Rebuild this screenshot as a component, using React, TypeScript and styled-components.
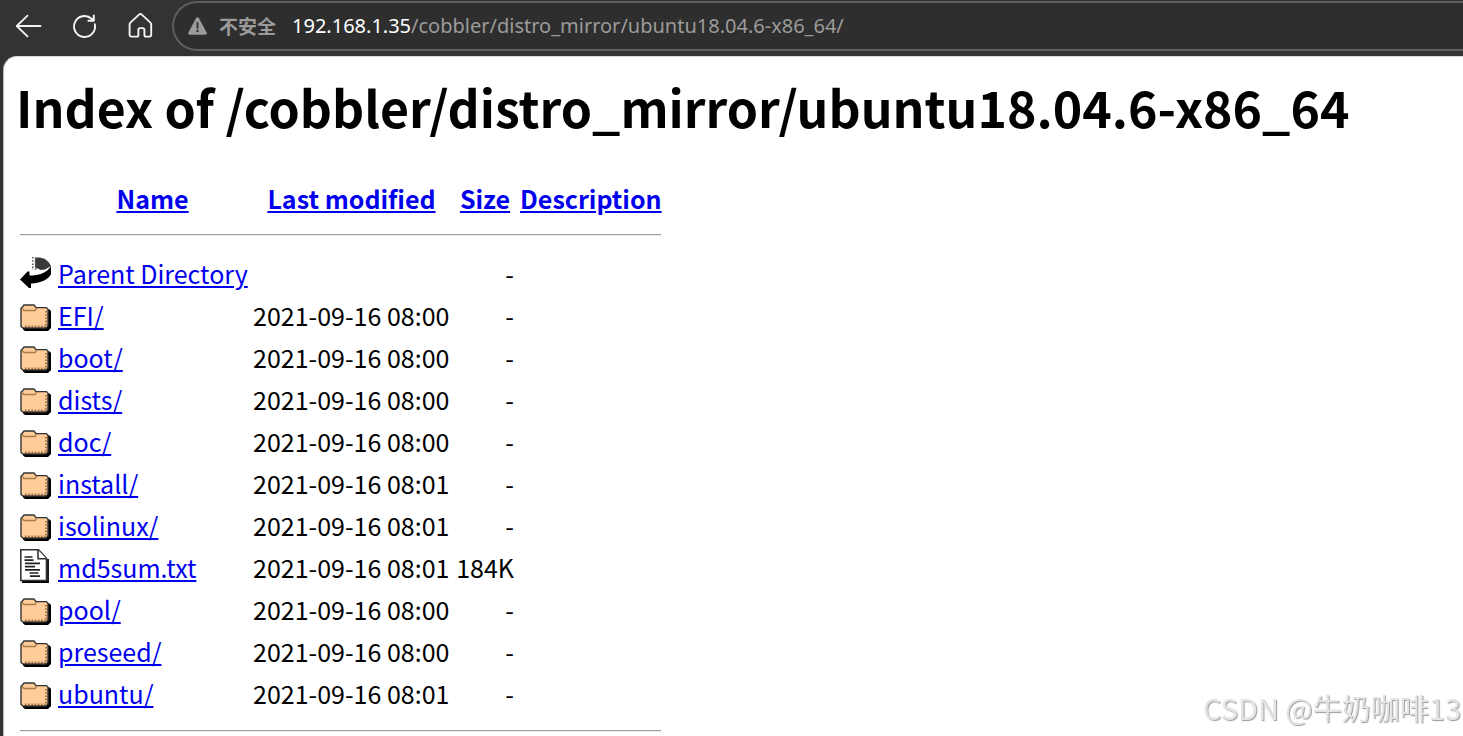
import styled, { createGlobalStyle } from 'styled-components';

const GlobalStyle = createGlobalStyle`
  *, *::before, *::after { box-sizing: border-box; }
  html { overflow: hidden; }
  body {
    margin: 0;
    background: #333333;
    color: #000000;
    font-family: 'Noto Sans CJK SC', 'Noto Sans', sans-serif;
    font-size: 25px;
  }
`;

const Browser = styled.div`
  display: flex;
  flex-direction: column;
  height: 100vh;
  overflow: hidden;
`;

const Toolbar = styled.header`
  display: flex;
  flex: none;
  align-items: center;
  padding: 1px 0 5px 12px;
  background: #333333;
`;

const ToolButton = styled.button`
  display: flex;
  align-items: center;
  justify-content: center;
  width: 32px;
  height: 32px;
  margin-right: 24px;
  padding: 0;
  border: 0;
  background: none;
  color: #f4f4f4;
`;

const AddressBar = styled.div`
  display: flex;
  flex: 1;
  align-items: center;
  min-width: 0;
  height: 50px;
  margin-left: -8px;
  padding-left: 14px;
  border: 2px solid #5e5e5e;
  border-right: 0;
  border-radius: 25px 0 0 25px;
  background: #2e2e2e;
`;

const SecurityButton = styled.button`
  display: flex;
  align-items: center;
  gap: 12px;
  margin-right: 16px;
  padding: 0;
  border: 0;
  background: none;
  color: #9b9b9b;
  font-family: 'Noto Sans CJK SC', sans-serif;
  font-size: 19px;
  font-weight: 700;
  line-height: 28px;
  white-space: nowrap;
`;

const Address = styled.div`
  flex: 1;
  overflow: hidden;
  color: #9b9b9b;
  font-family: 'Noto Sans', sans-serif;
  font-size: 20px;
  line-height: 32px;
  white-space: nowrap;
  outline: none;
`;

const Host = styled.span`
  color: #ffffff;
`;

const Page = styled.main`
  flex: 1;
  min-height: 0;
  margin-left: 3px;
  padding: 12px 12px 0;
  overflow: hidden;
  border-top: 1px solid #d8d8d8;
  border-left: 1px solid #b8b8b8;
  border-radius: 14px 0 0 0;
  background: #ffffff;
`;

const Title = styled.h1`
  margin: 0 0 36px;
  font-size: 50px;
  font-weight: 700;
  line-height: 74px;
  white-space: nowrap;
`;

const Listing = styled.table`
  width: 641px;
  margin-left: 4px;
  table-layout: fixed;
  border-collapse: collapse;
`;

const Col = styled.col<{ $width: number }>`
  width: ${({ $width }) => $width}px;
`;

const HeadCell = styled.th`
  padding: 0 6px 0 0;
  font-weight: 700;
  line-height: 38px;
  text-align: center;
  white-space: nowrap;
  &:last-child { padding-right: 0; }
`;

const Cell = styled.td<{ $align?: 'left' | 'right' }>`
  height: 42px;
  padding: 0 6px 0 0;
  line-height: 40px;
  text-align: ${({ $align = 'left' }) => $align};
  vertical-align: bottom;
  white-space: nowrap;
`;

const IconCell = styled(Cell)`
  padding: 0 0 4px;
`;

const RuleCell = styled.td`
  padding: 0;
`;

const Rule = styled.hr`
  margin: 17px 0 15px;
  border-width: 1px 0;
  border-style: solid;
  border-color: #9a9a9a transparent #eeeeee;
`;

const Link = styled.a`
  color: #0000ee;
  text-decoration: underline;
`;

const FileIcon = styled.svg`
  display: block;
  width: 32px;
  height: 35px;
`;

const Watermark = styled.div`
  position: fixed;
  right: 2px;
  bottom: 7px;
  color: #e4e4e4;
  font-size: 29px;
  font-weight: 400;
  line-height: 44px;
  text-shadow: 1px 1px 1px #9c9c9c;
  white-space: nowrap;
  pointer-events: none;
`;

function BackIcon() {
  return (
    <svg width="28" height="28" viewBox="0 0 28 28" fill="none" stroke="currentColor" strokeWidth="1.8" strokeLinecap="round" strokeLinejoin="round" aria-hidden="true">
      <path d="M26.5 14H2.7M13.5 3.6L2.7 14l10.8 10.4" />
    </svg>
  );
}

function ReloadIcon() {
  return (
    <svg width="28" height="28" viewBox="0 0 28 28" fill="none" stroke="currentColor" strokeWidth="1.9" strokeLinecap="round" strokeLinejoin="round" aria-hidden="true">
      <path d="M24.8 12.2A10.5 10.5 0 1 1 21.600 6.700L23.600 8.600M23.800 3.400V8.800H18.400" />
    </svg>
  );
}

function HomeIcon() {
  return (
    <svg width="28" height="28" viewBox="0 0 28 28" fill="none" stroke="currentColor" strokeWidth="1.9" strokeLinejoin="round" aria-hidden="true">
      <path d="M13 2.600a2 2 0 0 1 2.800 0l8.600 8c.5.5.8 1.100.8 1.800v10.400c0 1.100-.7 1.800-1.800 1.800h-3.400c-1 0-1.600-.6-1.600-1.600v-5.200c0-1-.7-1.700-1.700-1.700h-2.600c-1 0-1.700.7-1.700 1.700v5.200c0 1-.6 1.600-1.600 1.600H5.400c-1.100 0-1.800-.7-1.800-1.800V12.400c0-.7.3-1.300.8-1.800z" />
    </svg>
  );
}

function WarningIcon() {
  return (
    <svg width="19" height="18" viewBox="0 0 19 18" aria-hidden="true">
      <path d="M8 1.2a1.7 1.7 0 0 1 3 0l7.6 14.200c.6 1.100-.1 2.300-1.300 2.300H1.700c-1.200 0-1.900-1.200-1.300-2.300z" fill="#9b9b9b" />
      <path d="M9.500 6v5" stroke="#2e2e2e" strokeWidth="1.800" strokeLinecap="round" />
      <circle cx="9.500" cy="14" r="1.200" fill="#2e2e2e" />
    </svg>
  );
}

function FolderIcon() {
  return (
    <FileIcon viewBox="0 0 32 35" role="img" aria-label="[DIR]">
      <path d="M3 32v1.500L5 35h23l3-3V15l-2-2z" fill="#000000" />
      <path d="M1 30.500V12l1.500-1 1.500-2h10l2 2.600h10.500l1.500 1.800V30l-2 2H3z" fill="#ffcc99" stroke="#333333" strokeWidth="1.400" />
      <path d="M2 12.500l2 2h11l1.500-2" fill="none" stroke="#a87848" strokeWidth="1.300" />
      <path d="M5 30.300H25.500" fill="none" stroke="#a06a3a" strokeWidth="1.700" strokeDasharray="1.600 1.600" />
      <path d="M26 15V29.500" fill="none" stroke="#a06a3a" strokeWidth="1.700" strokeDasharray="1.600 1.600" />
    </FileIcon>
  );
}

function TextIcon() {
  return (
    <FileIcon viewBox="0 0 32 35" role="img" aria-label="[TXT]">
      <path d="M2 34H28V11" fill="none" stroke="#000000" strokeWidth="1.800" />
      <path d="M.8 1.800H18.500l8 8.500v22.200H.8z" fill="#ffffff" stroke="#333333" strokeWidth="1.600" />
      <path d="M18 2v8.700h8.500" fill="#ffffff" stroke="#333333" strokeWidth="1.600" />
      <path d="M4.500 9h8M4.500 12.200h9M5 15.400h15M5 18.600h10M5 21.800h15M9.500 25h9M10 28.200h10" fill="none" stroke="#222222" strokeWidth="1.700" />
    </FileIcon>
  );
}

function ParentIcon() {
  return (
    <FileIcon viewBox="0 0 32 35" role="img" aria-label="[PARENTDIR]">
      <path d="M15 3.500h5l5 1.500 3.500 3 2.500 4-6 3.500-4 .500-6-2.500z" fill="#3a3a3a" />
      <path d="M12.800 3v13M15.600 4.600v13" stroke="#555555" strokeWidth="1.500" strokeDasharray="1.600 1.600" />
      <path d="M31 12v8c-2 5-9 9-20 9.500v4.500H9L0 25.500 7.500 17.500H9.500V21.500c9 0 17-2 21.500-9.500z" fill="#000000" />
    </FileIcon>
  );
}

type Kind = 'parent' | 'folder' | 'text';

interface Entry {
  kind: Kind;
  name: string;
  modified: string;
  size: string;
}

const icons = { parent: ParentIcon, folder: FolderIcon, text: TextIcon };

const entries: Entry[] = [
  { kind: 'parent', name: 'Parent Directory', modified: '', size: '-' },
  { kind: 'folder', name: 'EFI/', modified: '2021-09-16 08:00', size: '-' },
  { kind: 'folder', name: 'boot/', modified: '2021-09-16 08:00', size: '-' },
  { kind: 'folder', name: 'dists/', modified: '2021-09-16 08:00', size: '-' },
  { kind: 'folder', name: 'doc/', modified: '2021-09-16 08:00', size: '-' },
  { kind: 'folder', name: 'install/', modified: '2021-09-16 08:01', size: '-' },
  { kind: 'folder', name: 'isolinux/', modified: '2021-09-16 08:01', size: '-' },
  { kind: 'text', name: 'md5sum.txt', modified: '2021-09-16 08:01', size: '184K' },
  { kind: 'folder', name: 'pool/', modified: '2021-09-16 08:00', size: '-' },
  { kind: 'folder', name: 'preseed/', modified: '2021-09-16 08:00', size: '-' },
  { kind: 'folder', name: 'ubuntu/', modified: '2021-09-16 08:01', size: '-' },
];

function EntryRow({ kind, name, modified, size }: Entry) {
  const Icon = icons[kind];
  return (
    <tr>
      <IconCell><Icon /></IconCell>
      <Cell><Link href={kind === 'parent' ? '../' : name}>{name}</Link></Cell>
      <Cell>{modified}</Cell>
      <Cell $align="right">{size}</Cell>
      <Cell />
    </tr>
  );
}

function RuleRow() {
  return (
    <tr>
      <RuleCell colSpan={5}><Rule /></RuleCell>
    </tr>
  );
}

export default function App() {
  return (
    <Browser>
      <GlobalStyle />
      <Toolbar>
        <ToolButton aria-label="返回"><BackIcon /></ToolButton>
        <ToolButton aria-label="刷新"><ReloadIcon /></ToolButton>
        <ToolButton aria-label="主页"><HomeIcon /></ToolButton>
        <AddressBar>
          <SecurityButton><WarningIcon />不安全</SecurityButton>
          <Address role="textbox" aria-label="地址" contentEditable suppressContentEditableWarning spellCheck={false}>
            <Host>192.168.1.35</Host>/cobbler/distro_mirror/ubuntu18.04.6-x86_64/
          </Address>
        </AddressBar>
      </Toolbar>
      <Page>
        <Title>Index of /cobbler/distro_mirror/ubuntu18.04.6-x86_64</Title>
        <Listing>
          <colgroup>
            <Col $width={38} />
            <Col $width={195} />
            <Col $width={203} />
            <Col $width={64} />
            <Col $width={141} />
          </colgroup>
          <thead>
            <tr>
              <HeadCell />
              <HeadCell><Link href="?C=N;O=D">Name</Link></HeadCell>
              <HeadCell><Link href="?C=M;O=A">Last modified</Link></HeadCell>
              <HeadCell><Link href="?C=S;O=A">Size</Link></HeadCell>
              <HeadCell><Link href="?C=D;O=A">Description</Link></HeadCell>
            </tr>
          </thead>
          <tbody>
            <RuleRow />
            {entries.map((entry) => <EntryRow key={entry.name} {...entry} />)}
            <RuleRow />
          </tbody>
        </Listing>
      </Page>
      <Watermark>CSDN @牛奶咖啡13</Watermark>
    </Browser>
  );
}
